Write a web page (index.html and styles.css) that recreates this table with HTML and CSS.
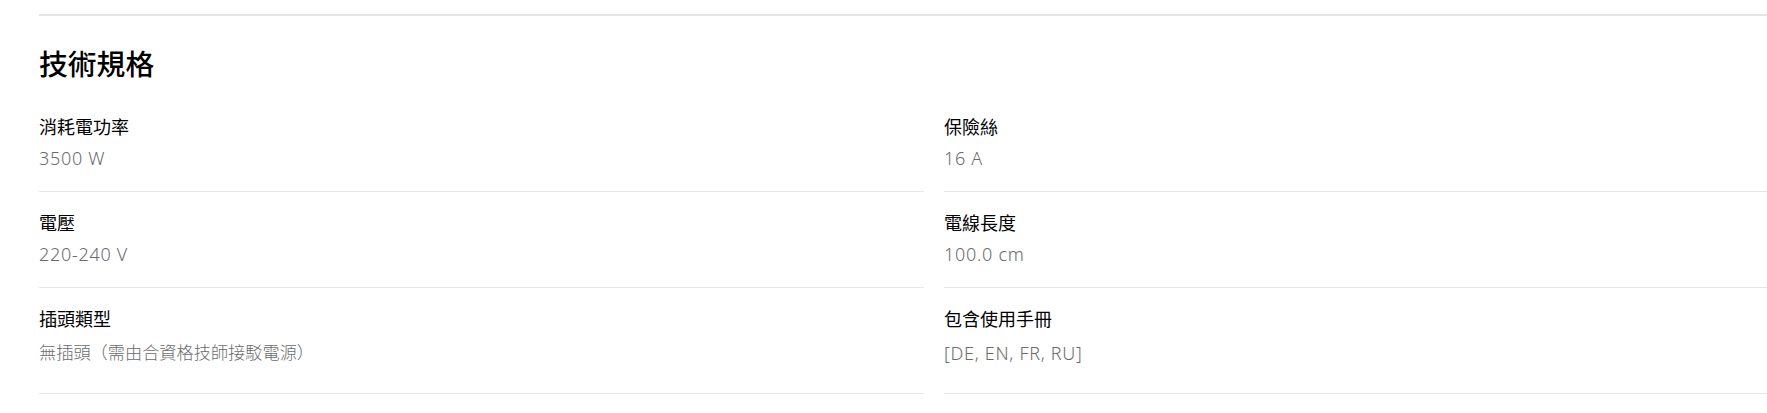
FILE: index.html
```html
<!DOCTYPE html>
<html lang="zh-Hant">
<head>
<meta charset="utf-8">
<title>技術規格</title>
<link rel="stylesheet" href="styles.css">
</head>
<body>
<section class="specs">
  <div class="rule"></div>
  <h2 class="title">技術規格</h2>
  <dl class="grid">
    <div class="spec"><dt class="label">消耗電功率</dt><dd class="value">3500 W</dd></div>
    <div class="spec"><dt class="label">保險絲</dt><dd class="value">16 A</dd></div>
    <div class="spec"><dt class="label">電壓</dt><dd class="value">220-240 V</dd></div>
    <div class="spec"><dt class="label">電線長度</dt><dd class="value">100.0 cm</dd></div>
    <div class="spec spec-last"><dt class="label">插頭類型</dt><dd class="value value-cjk">無插頭（需由合資格技師接駁電源）</dd></div>
    <div class="spec spec-last"><dt class="label">包含使用手冊</dt><dd class="value">[DE, EN, FR, RU]</dd></div>
  </dl>
</section>
</body>
</html>
```
FILE: styles.css
```css
html, body {
  margin: 0;
  padding: 0;
  background: #ffffff;
  overflow: hidden;
}

body {
  font-family: "Noto Sans", "Noto Sans CJK TC", sans-serif;
  color: #000000;
}

.specs {
  padding-left: 39px;
  width: 1790px;
}

.rule {
  margin-top: 14px;
  height: 2px;
  background: #e5e5ea;
}

.title {
  margin: 29px 0 15px;
  font-family: "Noto Sans CJK TC", sans-serif;
  font-size: 28.8px;
  line-height: 36px;
  font-weight: 500;
  color: #000000;
}

.grid {
  margin: 0;
  display: grid;
  grid-template-columns: 885px 885px;
  column-gap: 20px;
}

.spec {
  padding: 17px 0 20px;
  border-bottom: 1px solid #e6e6e6;
}

.label {
  margin: 0;
  font-family: "Noto Sans CJK TC", sans-serif;
  font-size: 18px;
  line-height: 26px;
  font-weight: 400;
  color: #000000;
}

.value {
  margin: 6px 0 0;
  font-family: "Noto Sans", "Noto Sans CJK TC", sans-serif;
  font-size: 18px;
  line-height: 26px;
  font-weight: 300;
  letter-spacing: 0.7px;
  color: #6b6b6b;
}

.value-cjk {
  font-size: 17.2px;
  letter-spacing: 0;
}

.spec-last {
  padding-bottom: 27px;
}

.spec-last .value {
  margin-top: 9px;
}
```
